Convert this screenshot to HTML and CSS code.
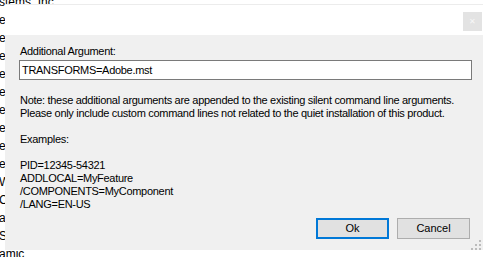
FILE: index.html
```html
<!DOCTYPE html>
<html>
<head>
<meta charset="utf-8">
<link rel="stylesheet" href="styles.css">
</head>
<body>
<div class="page">
  <div class="list">
    <div class="row top">stems, Inc</div>
    <div class="row">e</div>
    <div class="row">e</div>
    <div class="row">e</div>
    <div class="row">e</div>
    <div class="row">e</div>
    <div class="row">e</div>
    <div class="row">e</div>
    <div class="row">e</div>
    <div class="row">e</div>
    <div class="row">W</div>
    <div class="row">C</div>
    <div class="row">a</div>
    <div class="row">S</div>
    <div class="row bottom">amic</div>
  </div>

  <div class="dialog">
    <div class="titlebar">
      <div class="close">&#x2715;</div>
    </div>
    <div class="body">
      <label class="label">Additional Argument:</label>
      <div class="input">TRANSFORMS=Adobe.mst</div>
      <div class="text">
        <p>Note: these additional arguments are appended to the existing silent command line arguments.<br>Please only include custom command lines not related to the quiet installation of this product.</p>
        <p>Examples:</p>
        <p>PID=12345-54321<br>ADDLOCAL=MyFeature<br>/COMPONENTS=MyComponent<br>/LANG=EN-US</p>
      </div>
      <div class="buttons">
        <div class="btn ok">Ok</div>
        <div class="btn">Cancel</div>
      </div>
    </div>
    <svg class="grip" width="10" height="10" viewBox="0 0 10 10">
      <rect x="8" y="0" width="2" height="2" fill="#bcbcbc"/>
      <rect x="4" y="4" width="2" height="2" fill="#bcbcbc"/>
      <rect x="8" y="4" width="2" height="2" fill="#bcbcbc"/>
      <rect x="0" y="8" width="2" height="2" fill="#bcbcbc"/>
      <rect x="4" y="8" width="2" height="2" fill="#bcbcbc"/>
      <rect x="8" y="8" width="2" height="2" fill="#bcbcbc"/>
    </svg>
  </div>
</div>
</body>
</html>
```

FILE: styles.css
```css
html, body {
  margin: 0;
  padding: 0;
  background: #ffffff;
}
.page {
  position: relative;
  width: 490px;
  height: 257px;
  overflow: hidden;
  font-family: "Liberation Sans", Arial, sans-serif;
}
.list {
  display: flex;
  flex-direction: column;
  margin-top: -7px;
  margin-left: -1px;
}
.row {
  height: 18px;
  line-height: 18px;
  font-size: 12px;
  color: #000;
  white-space: nowrap;
  width: 6px;
  overflow: hidden;
}
.row.top {
  width: 60px;
}
.row.bottom {
  width: 30px;
}
.dialog {
  position: absolute;
  left: 5px;
  top: 4px;
  width: 478px;
  height: 246px;
  border-top: 1px solid #ececec;
  box-sizing: border-box;
  display: flex;
  flex-direction: column;
  background: #ffffff;
}
.titlebar {
  height: 30px;
  flex: none;
  display: flex;
  justify-content: flex-end;
  align-items: flex-start;
  padding: 7px 1px 0 0;
  box-sizing: border-box;
  background: #ffffff;
}
.close {
  width: 19px;
  height: 19px;
  background: #e3e3e3;
  color: #f7f7f7;
  font-size: 8px;
  line-height: 19px;
  text-align: center;
}
.body {
  flex: 1;
  background: #f0f0f0;
  display: flex;
  flex-direction: column;
  padding: 10px 13px 11px 14px;
  font-size: 11px;
  line-height: 13px;
  letter-spacing: -0.3px;
  color: #000;
  white-space: nowrap;
}
.label {
  display: block;
  padding-left: 1px;
  height: 13px;
}
.input {
  margin-top: 2px;
  height: 20px;
  box-sizing: border-box;
  width: 453px;
  border: 1px solid #7a7a7a;
  background: #ffffff;
  padding: 0 2px;
  line-height: 18px;
  font-size: 11px;
}
.text {
  margin-top: 14px;
  padding-left: 1px;
}
.text p {
  margin: 0 0 13px 0;
}
.text p:last-child {
  margin-bottom: 0;
}
.buttons {
  margin-top: auto;
  display: flex;
  justify-content: flex-end;
  gap: 8px;
}
.btn {
  width: 73px;
  height: 21px;
  box-sizing: border-box;
  border: 1px solid #adadad;
  background: #e1e1e1;
  text-align: center;
  line-height: 19px;
  font-size: 11px;
  letter-spacing: 0;
}
.btn.ok {
  border: 2px solid #0078d7;
  line-height: 17px;
}
.grip {
  position: absolute;
  right: 2px;
  bottom: 0px;
}
```
